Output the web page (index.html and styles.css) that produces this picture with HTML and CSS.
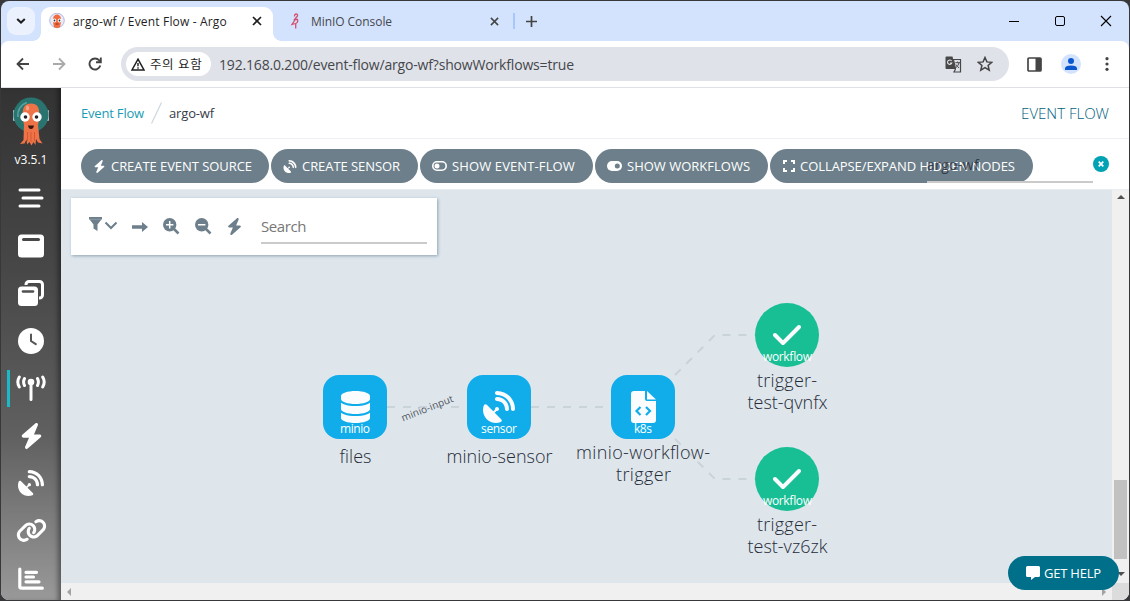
FILE: index.html
```html
<!DOCTYPE html>
<html lang="ko">
<head>
<meta charset="utf-8">
<title>argo-wf / Event Flow - Argo</title>
<link rel="stylesheet" href="styles.css">
</head>
<body>
<svg width="0" height="0" class="defs">
  <defs>
    <symbol id="bolt" viewBox="0 0 448 512"><path d="M349.4 44.6c5.9-13.7 1.5-29.7-10.6-38.5s-28.6-8-39.9 1.8l-256 224c-10 8.8-13.6 22.9-8.9 35.3S50.7 288 64 288H175.5L98.6 467.4c-5.9 13.7-1.5 29.7 10.6 38.5s28.6 8 39.9-1.8l256-224c10-8.8 13.6-22.9 8.9-35.3s-16.6-20.7-30-20.7H272.5L349.4 44.6z"/></symbol>
    <symbol id="dish" viewBox="0 0 512 512"><path d="M192 32c0-17.7 14.3-32 32-32C383.1 0 512 128.9 512 288c0 17.7-14.3 32-32 32s-32-14.3-32-32C448 164.3 347.7 64 224 64c-17.7 0-32-14.3-32-32zM60.6 220.6L164.7 324.7l28.4-28.4c-.7-2.6-1.1-5.4-1.1-8.3c0-17.7 14.3-32 32-32s32 14.3 32 32s-14.3 32-32 32c-2.9 0-5.6-.4-8.3-1.1l-28.4 28.4L291.4 451.4c14.5 14.5 11.8 38.8-7.3 46.3C260.5 506.9 234.9 512 208 512C93.1 512 0 418.9 0 304c0-26.9 5.1-52.5 14.4-76.1c7.5-19 31.8-21.8 46.3-7.3zM224 96c106 0 192 86 192 192c0 17.7-14.3 32-32 32s-32-14.3-32-32c0-70.7-57.3-128-128-128c-17.7 0-32-14.3-32-32s14.3-32 32-32z"/></symbol>
    <symbol id="check" viewBox="0 0 448 512"><path d="M438.6 105.4c12.5 12.5 12.5 32.8 0 45.3l-256 256c-12.5 12.5-32.8 12.5-45.3 0l-128-128c-12.5-12.5-12.5-32.8 0-45.3s32.8-12.5 45.3 0L160 338.7 393.4 105.4c12.5-12.5 32.8-12.5 45.3 0z"/></symbol>
    <symbol id="cross" viewBox="0 0 10 10"><path d="M1 1l8 8M9 1l-8 8" fill="none" stroke="currentColor" stroke-width="1.7"/></symbol>
  </defs>
</svg>
<div class="window">
  <header class="tabstrip">
    <div class="tab-search"><svg width="10" height="8" viewBox="0 0 10 8"><path d="M1.2 2l3.8 3.6L8.800 2" fill="none" stroke="#1f1f1f" stroke-width="2"/></svg></div>
    <div class="tab tab-active">
      <svg class="favicon" width="16" height="16" viewBox="0 0 16 16"><circle cx="8" cy="7.500" r="7.300" fill="#e9ebfb" stroke="#a6a9d6" stroke-width=".8"/><path d="M4 6C4 3 6 1.500 8 1.500S12 3 12 6l.3 2-1.300 6q-3 2-6 0L3.700 8z" fill="#ef6c3f"/><circle cx="5.300" cy="7.500" r="2" fill="#fff"/><circle cx="10.700" cy="7.500" r="2" fill="#fff"/><circle cx="5.500" cy="7.500" r=".9" fill="#333"/><circle cx="10.500" cy="7.500" r=".9" fill="#333"/><path d="M6.500 11h3" stroke="#8a2f18" stroke-width="1"/></svg>
      <span class="t tab-title title-argo">argo-wf / Event Flow - Argo</span>
      <svg class="tab-close" width="10" height="10"><use href="#cross"/></svg>
    </div>
    <div class="tab tab-idle">
      <svg class="favicon" width="16" height="16" viewBox="0 0 16 16" fill="none" stroke="#d3506f"><path d="M7.500 3.500Q7.500 1 9.200 1T10.500 3L7.500 6.500 10.500 6.500Q11.500 9.500 8.500 10.500L5 11.500 8 7M8.700 10.500V15.500" stroke-width="1.300"/></svg>
      <span class="t tab-title">MinIO Console</span>
      <svg class="tab-close" width="9" height="9"><use href="#cross"/></svg>
    </div>
    <div class="tab-sep"></div>
    <svg class="tab-new" width="11" height="11" viewBox="0 0 11 11"><path d="M5.500 0v11M0 5.500h11" stroke="#444" stroke-width="1.700"/></svg>
    <div class="win-buttons">
      <svg width="12" height="12" viewBox="0 0 12 12"><path d="M1 6.500h10" stroke="#000"/></svg>
      <svg width="12" height="12" viewBox="0 0 12 12"><rect x="1.500" y="1.500" width="9" height="9" rx="1.500" fill="none" stroke="#000"/></svg>
      <svg width="12" height="12" viewBox="0 0 12 12"><path d="M1 1l10 10M11 1L1 11" stroke="#000" stroke-width="1.100"/></svg>
    </div>
  </header>
  <div class="toolbar">
    <div class="nav">
      <svg width="14" height="14" viewBox="0 0 14 14" fill="none" stroke="#444" stroke-width="1.800"><path d="M13 7H2M7 1.500L1.500 7 7 12.500"/></svg>
      <svg width="14" height="14" viewBox="0 0 14 14" fill="none" stroke="#aaa" stroke-width="1.800"><path d="M1 7h11M7 1.500L12.500 7 7 12.500"/></svg>
      <svg width="14" height="14" viewBox="0 0 14 14" fill="none" stroke="#444" stroke-width="1.900"><path d="M12.300 8.500A5.500 5.500 0 1 1 11.300 3.500L12.500 5M12.800.5V5.300H8"/></svg>
    </div>
    <div class="omnibox">
      <div class="chip">
        <svg width="14" height="13" viewBox="0 0 14 13"><path d="M7 1.200L13 12H1z" fill="none" stroke="#1f1f1f" stroke-width="1.500"/><path d="M7 5v3.300M7 9.300v1.400" stroke="#1f1f1f" stroke-width="1.400"/></svg>
        <span class="t chip-text">주의 요함</span>
      </div>
      <span class="t url">192.168.0.200/event-flow/argo-wf?showWorkflows=true</span>
      <svg class="translate" width="17" height="17" viewBox="0 0 17 17"><path d="M1.500.5h6L10.500 13h-9a1 1 0 0 1-1-1V1.500a1 1 0 0 1 1-1z" fill="#474747"/><path d="M6.600 5A2.200 2.200 0 1 0 6.800 7H5" fill="none" stroke="#e0e2e9" stroke-width="1.100"/><path d="M8.500 3.500h7v12.500H9l1.500-3z" fill="#e0e2e9" stroke="#474747" stroke-width="1.200"/><path d="M10.300 6.700h4.700M12.700 5.500v1.200M14 7q-.8 3-3.500 5M11 8.500q1 2.200 3 3.300" fill="none" stroke="#474747"/></svg>
      <svg class="star" width="16" height="16" viewBox="0 0 16 16"><path d="M8 1.500l1.900 4.400 4.800.4-3.600 3.200 1.100 4.700L8 11.700l-4.200 2.500 1.100-4.700L1.300 6.300l4.800-.4z" fill="none" stroke="#444" stroke-width="1.500"/></svg>
    </div>
    <svg class="side-panel" width="15" height="15" viewBox="0 0 15 15"><rect x="1" y="1" width="13" height="13" rx="1" fill="none" stroke="#444" stroke-width="1.700"/><path d="M8.500 1H14v13H8.500z" fill="#444"/></svg>
    <svg class="profile" width="20" height="20" viewBox="0 0 20 20"><circle cx="10" cy="10" r="10" fill="#d3e3fd"/><circle cx="10" cy="7" r="3" fill="#0b57d0"/><path d="M4 16v-1.500Q4 11.500 10 11.500T16 14.500V16z" fill="#0b57d0"/></svg>
    <svg class="kebab" width="4" height="14" viewBox="0 0 4 14" fill="#444"><circle cx="2" cy="1.700" r="1.600"/><circle cx="2" cy="7" r="1.600"/><circle cx="2" cy="12.300" r="1.600"/></svg>
  </div>
  <div class="page">
    <nav class="sidebar">
      <svg class="logo" width="38" height="52" viewBox="0 0 38 52"><rect x="1" y="14" width="3" height="11" rx="1" fill="#a9bfcf"/><rect x="34" y="14" width="3" height="11" rx="1" fill="#a9bfcf"/><circle cx="19" cy="19" r="17.500" fill="#2a7470"/><path d="M6 21A13 13 0 0 1 15 6.500" fill="none" stroke="#57a3a0" stroke-width="1.500"/><path d="M11 20C10 11 13 7.500 19 7.500S28 11 27 20q0 6-1 9l1.500 14 3 4.500-4.500-1-2-3.500-.5 6-2-3-2 3.500-2-3.500-2.500 2.500-.5-5-2 4-4.500.5 3.500-4L12 29Q11 25 11 20z" fill="#ee7448"/><path d="M15.500 36v9M19 36v10M22.500 36v9" stroke="#d65632"/><ellipse cx="15.500" cy="12" rx="1.700" ry="2.500" fill="#f8a184"/><circle cx="13" cy="21" r="4.700" fill="#fff"/><circle cx="25" cy="21" r="4.700" fill="#fff"/><circle cx="13.500" cy="21" r="1.800" fill="#222"/><circle cx="24.500" cy="21" r="1.800" fill="#222"/><path d="M16 29.500h6q-.6 3.500-3 3.500t-3-3.500z" fill="#3b1712"/></svg>
      <span class="t version">v3.5.1</span>
      <a class="item"><svg width="26" height="20" viewBox="0 0 26 20" stroke="#fff" stroke-width="3" stroke-linecap="round"><path d="M2 2h19M5 10h19M2 18h19"/></svg></a>
      <a class="item"><svg width="26" height="24" viewBox="0 0 26 24"><rect y=".5" width="26" height="23" rx="3.500" fill="#fff"/><path d="M5.500 5.500h15" stroke="#484848" stroke-width="3" stroke-linecap="round"/></svg></a>
      <a class="item"><svg width="26" height="26" viewBox="0 0 26 26"><path d="M8 5V4.500a3 3 0 0 1 3-3h10.500a3 3 0 0 1 3 3V15a3 3 0 0 1-3 3H21" fill="none" stroke="#fff" stroke-width="3"/><rect y="6.500" width="20" height="19.500" rx="3.500" fill="#fff"/><path d="M5 11.500h10" stroke="#505050" stroke-width="2.600" stroke-linecap="round"/></svg></a>
      <a class="item"><svg width="26" height="26" viewBox="0 0 26 26"><circle cx="13" cy="13" r="13" fill="#fff"/><path d="M13 6.500V13l4.800 3.200" fill="none" stroke="#555" stroke-width="2" stroke-linecap="round"/></svg></a>
      <a class="item item-active"><svg width="30" height="26" viewBox="0 0 30 26" fill="none" stroke="#fff" stroke-width="3" stroke-linecap="round"><circle cx="15" cy="7" r="3.300" fill="#fff" stroke="none"/><path d="M15 7v17.500M8.500 3.500q-1.800 3.500 0 7M21.500 3.500q1.800 3.500 0 7M3.300 2q-3 5 0 10M26.700 2q3 5 0 10"/></svg></a>
      <a class="item"><svg width="23" height="26"><use href="#bolt"/></svg></a>
      <a class="item"><svg width="26" height="26"><use href="#dish"/></svg></a>
      <a class="item"><svg width="31" height="25" viewBox="0 0 640 512"><path d="M579.8 267.7c56.5-56.5 56.5-148 0-204.5c-50-50-128.8-56.5-186.3-15.4l-1.6 1.1c-14.4 10.3-17.7 30.3-7.4 44.600s30.3 17.7 44.600 7.400l1.600-1.100c32.100-22.900 76-19.300 103.800 8.600c31.500 31.500 31.500 82.500 0 114L422.300 334.800c-31.500 31.500-82.500 31.500-114 0c-27.900-27.900-31.500-71.800-8.600-103.800l1.100-1.600c10.300-14.400 6.900-34.400-7.400-44.600s-34.400-6.900-44.600 7.400l-1.100 1.600C206.500 251.200 213 330 263 380c56.500 56.500 148 56.500 204.500 0L579.800 267.700zM60.200 244.300c-56.500 56.500-56.500 148 0 204.500c50 50 128.800 56.500 186.300 15.400l1.600-1.100c14.400-10.300 17.700-30.300 7.400-44.600s-30.300-17.700-44.600-7.400l-1.600 1.100c-32.100 22.900-76 19.300-103.800-8.600C74 372 74 321 105.500 289.500L217.700 177.200c31.500-31.500 82.500-31.500 114 0c27.900 27.900 31.500 71.800 8.600 103.900l-1.100 1.600c-10.300 14.400-6.900 34.400 7.400 44.600s34.400 6.900 44.600-7.400l1.100-1.600C433.500 260.800 427 182 377 132c-56.500-56.500-148-56.500-204.500 0L60.200 244.300z"/></svg></a>
      <a class="item"><svg width="26" height="23" viewBox="0 0 26 23" fill="none" stroke="#fff" stroke-width="3.200" stroke-linecap="round" stroke-linejoin="round"><path d="M1.800 2v17.500q0 1.700 1.700 1.700H24.300M8 5.300h10.500M8 10h7.500M8 14.800h13" /></svg></a>
    </nav>
    <main class="main">
      <div class="crumbs">
        <a class="t crumb-link">Event Flow</a>
        <svg width="11" height="22" viewBox="0 0 11 22"><path d="M10.500.5L.5 21.500" stroke="#ccd6dd" stroke-width="1.200"/></svg>
        <span class="t crumb">argo-wf</span>
        <span class="t heading">EVENT FLOW</span>
      </div>
      <div class="actions">
        <button class="pill p1"><svg width="13" height="13"><use href="#bolt"/></svg><span class="t">CREATE EVENT SOURCE</span></button>
        <button class="pill p2"><svg width="14" height="13"><use href="#dish"/></svg><span class="t">CREATE SENSOR</span></button>
        <button class="pill p3"><svg width="15" height="10" viewBox="0 0 15 10"><rect x=".8" y=".8" width="13.400" height="8.400" rx="4.200" fill="none" stroke="#fff" stroke-width="1.600"/><circle cx="5" cy="5" r="2.500"/></svg><span class="t">SHOW EVENT-FLOW</span></button>
        <button class="pill p4"><svg width="15" height="10" viewBox="0 0 15 10"><rect width="15" height="10" rx="5"/><circle cx="10.300" cy="5" r="2.500" fill="#6d7f8b"/></svg><span class="t">SHOW WORKFLOWS</span></button>
        <button class="pill p5"><svg width="12" height="12" viewBox="0 0 12 12"><path d="M4 1H1v3M8 1h3v3M4 11H1V8M8 11h3V8" fill="none" stroke="#fff" stroke-width="2"/></svg><span class="t">COLLAPSE/EXPAND HIDDEN NODES</span></button>
        <div class="ns-field"><span class="t">argo-wf</span></div>
        <div class="ns-clear"><svg width="6" height="6" viewBox="0 0 6 6"><path d="M.7.7l4.600 4.600M5.300.7L.7 5.300" stroke="#fff" stroke-width="1.700"/></svg></div>
      </div>
      <div class="canvas-wrap">
        <div class="canvas">
          <div class="panel">
            <svg class="filter" width="28" height="15" viewBox="0 0 28 15"><path d="M0 0h13v1.800L8.500 7.500V14L4.500 11.500v-4L0 1.800z"/><path d="M0 2.300h13" stroke="#9aa8b1" stroke-width=".7"/><path d="M16.500 5.500L22 11l5.500-5.500" fill="none" stroke="#6d7f8b" stroke-width="2"/></svg>
            <svg width="16" height="10" viewBox="0 0 16 10"><path d="M0 3.300h10V0l6 5-6 5V6.700H0z"/></svg>
            <svg width="17" height="17" viewBox="0 0 17 17"><circle cx="6.700" cy="6.700" r="6.700"/><path d="M11 11l4.500 4.500" stroke="#6d7f8b" stroke-width="2.500"/><path d="M3 6.700h7.400M6.700 3v7.400" stroke="#fff" stroke-width="1.500"/></svg>
            <svg width="17" height="17" viewBox="0 0 17 17"><circle cx="6.700" cy="6.700" r="6.700"/><path d="M11 11l4.500 4.500" stroke="#6d7f8b" stroke-width="2.500"/><path d="M3 6.700h7.400" stroke="#fff" stroke-width="1.500"/></svg>
            <svg width="15" height="17"><use href="#bolt"/></svg>
            <div class="search"><span class="t">Search</span></div>
          </div>
          <svg class="graph" width="1051" height="393" viewBox="61 190 1051 393">
            <g fill="none" stroke="#c9d3da" stroke-width="2" stroke-dasharray="8 8">
              <path d="M387 407H467"/><path d="M531 407H611"/>
              <path d="M675 375L715 335H755"/><path d="M675 439L715 479H755"/>
            </g>
            <g fill="#10adea">
              <rect x="323" y="375" width="64" height="64" rx="16"/>
              <rect x="467" y="375" width="64" height="64" rx="16"/>
              <rect x="611" y="375" width="64" height="64" rx="16"/>
            </g>
            <g fill="#18be94"><circle cx="787" cy="335" r="32"/><circle cx="787" cy="479" r="32"/></g>
            <g fill="#fafcfe">
              <svg x="341" y="391" width="29" height="32" preserveAspectRatio="none" viewBox="0 0 448 512"><path d="M448 80v48c0 44.200-100.300 80-224 80S0 172.200 0 128V80C0 35.800 100.300 0 224 0S448 35.800 448 80zM393.200 214.700c20.800-7.400 39.900-16.900 54.800-28.600V288c0 44.200-100.300 80-224 80S0 332.200 0 288V186.100c14.900 11.800 34 21.200 54.800 28.600C99.700 230.700 159.500 240 224 240s124.300-9.300 169.200-25.300zM0 346.100c14.900 11.800 34 21.200 54.800 28.600C99.700 390.700 159.500 400 224 400s124.300-9.300 169.200-25.300c20.800-7.400 39.900-16.900 54.800-28.600V432c0 44.200-100.300 80-224 80S0 476.200 0 432V346.100z"/></svg>
              <use href="#dish" x="483" y="391" width="32" height="32"/>
              <path d="M634 391h11v8q0 2 2 2h9v19q0 3-3 3h-19q-3 0-3-3v-26q0-3 3-3zM647 391l9 8.500h-9z"/>
              <path d="M640.500 407l-4 4 4 4M646 407l4 4-4 4" fill="none" stroke="#10adea" stroke-width="2.200"/>
              <use href="#check" x="773" y="319" width="28" height="32"/>
              <use href="#check" x="773" y="463" width="28" height="32"/>
            </g>
            <g class="kind">
              <text x="340" y="433" textLength="30">minio</text>
              <text x="481" y="433" textLength="36">sensor</text>
              <text x="634" y="433" textLength="18">k8s</text>
              <text x="763" y="361" textLength="49">workflow</text>
              <text x="763" y="505" textLength="49">workflow</text>
            </g>
            <g class="name">
              <text x="339.500" y="463" textLength="32">files</text>
              <text x="446.500" y="463" textLength="106">minio-sensor</text>
              <text x="576" y="459" textLength="134">minio-workflow-</text>
              <text x="616" y="481" textLength="55">trigger</text>
              <text x="757" y="387" textLength="60">trigger-</text>
              <text x="747.500" y="409" textLength="80">test-qvnfx</text>
              <text x="757" y="531" textLength="60">trigger-</text>
              <text x="747.500" y="553" textLength="80">test-vz6zk</text>
            </g>
            <text class="edge" x="403" y="421.500" textLength="55" transform="rotate(-21.500 403 421.500)">minio-input</text>
          </svg>
        </div>
        <div class="vbar"><i class="up"></i><div class="thumb"></div><i class="down"></i></div>
        <div class="hbar"><i class="left"></i><i class="right"></i></div>
        <div class="corner"></div>
      </div>
    </main>
    <div class="help"><svg width="14" height="14" viewBox="0 0 14 14"><path d="M1.500 0h11Q14 0 14 1.500v8Q14 11 12.500 11H9l-4 3v-3H1.500Q0 11 0 9.500v-8Q0 0 1.500 0z"/></svg><span class="t">GET HELP</span></div>
  </div>
</div>
</body>
</html>
```

FILE: styles.css
```css
* { box-sizing: border-box; }
body { margin: 0; width: 1130px; height: 601px; overflow: hidden; background: #38383b; font-family: "Open Sans", "Noto Sans CJK KR", sans-serif; font-size: 13px; }
.defs { position: absolute; }
svg { display: block; flex: none; }
.t { white-space: nowrap; flex: none; }
.window { margin: 1px; width: 1128px; height: 599px; border-radius: 8px; overflow: hidden; background: #d3e3fd; display: flex; flex-direction: column; }

.tabstrip { height: 40px; flex: none; display: flex; align-items: center; padding-left: 6px; }
.tab-search { width: 28px; height: 28px; border-radius: 9px; background: #ebf2fe; display: flex; align-items: center; justify-content: center; }
.tab { display: flex; align-items: center; }
.tab-title { font-size: 12px; color: #1f1f1f; margin-left: 8px; padding-top: 1px; }
.title-argo { letter-spacing: .17px; }
.tab-active { align-self: flex-end; width: 232px; height: 34px; margin-left: 6px; padding: 0 11px 6px 8px; background: #fff; border-radius: 9px 9px 0 0; color: #1f1f1f; position: relative; }
.tab-active::before, .tab-active::after { content: ""; position: absolute; bottom: 0; width: 8px; height: 8px; }
.tab-active::before { left: -8px; background: radial-gradient(circle at 0 0, transparent 7.5px, #fff 8px); }
.tab-active::after { right: -8px; background: radial-gradient(circle at 100% 0, transparent 7.5px, #fff 8px); }
.tab-close { margin-left: auto; }
.tab-idle { width: 226px; padding-left: 14px; color: #444; }
.tab-idle .tab-title { color: #45484c; letter-spacing: -.06px; }
.tab-sep { width: 2px; height: 16px; margin-left: 14px; background: #a8c7fa; }
.tab-new { margin-left: 11px; }
.win-buttons { margin-left: auto; display: flex; gap: 34px; padding-right: 17px; }

.toolbar { height: 47px; flex: none; background: #fff; border-radius: 8px 8px 0 0; border-bottom: 1px solid #dfe1e4; display: flex; align-items: center; padding-left: 15px; }
.nav { display: flex; gap: 22px; width: 105px; }
.omnibox { width: 888px; height: 34px; border-radius: 17px; background: #e0e2e9; display: flex; align-items: center; padding-left: 5px; }
.chip { width: 85px; height: 24px; border-radius: 12px; background: #fff; display: flex; align-items: center; padding-left: 5px; gap: 5px; }
.chip-text { font-size: 12.5px; letter-spacing: .6px; color: #1f1f1f; padding-bottom: 2px; }
.url { margin-left: 8px; font-size: 14px; letter-spacing: -.17px; color: #45474b; }
.translate { margin-left: auto; }
.star { margin: 0 16px 0 15px; }
.side-panel { margin-left: 18px; }
.profile { margin-left: 19px; }
.kebab { margin-left: 24px; }

.page { flex: 1; display: flex; min-height: 0; position: relative; }
.sidebar { width: 60px; background: linear-gradient(#333 0, #474747 35%, #606060 68%, #999 100%); box-shadow: inset -5px 0 5px -2px rgba(0,0,0,.4); display: flex; flex-direction: column; align-items: center; padding-top: 8px; fill: #fff; }
.version { color: #fff; font-size: 12px; line-height: 16px; margin-top: 4px; height: 22.5px; flex: none; }
.item { width: 60px; height: 47.500px; flex: none; display: flex; align-items: center; justify-content: center; position: relative; }
.item-active::before { content: ""; position: absolute; left: 6px; top: 5px; width: 3px; height: 37px; background: #18b9c9; }
.main { width: 1068px; display: flex; flex-direction: column; background: #fff; }
.crumbs { height: 51px; border-bottom: 1px solid #edf1f5; display: flex; align-items: center; padding: 0 20px; }
.crumb-link { color: #1a9cb3; margin-right: 7px; letter-spacing: -.19px; }
.crumb { color: #363c4a; margin-left: 7px; letter-spacing: -.15px; }
.heading { margin-left: auto; color: #006280; font-size: 15px; font-weight: 300; }
.actions { height: 51px; border-bottom: 1px solid #e8edf2; display: flex; align-items: center; gap: 2px; padding: 4px 0 0 20px; position: relative; }
.pill { height: 34px; border: 0; border-radius: 17px; background: #6d7f8b; color: #fff; fill: #fff; font: 13px "Open Sans", sans-serif; letter-spacing: -.06px; padding: 0 0 0 12px; display: flex; align-items: center; gap: 5px; }
.p1 { width: 188px; }
.p2 { width: 147px; }
.p3 { width: 173px; letter-spacing: .12px; }
.p4 { width: 173px; letter-spacing: 0; }
.p5 { width: 263px; padding-left: 13px; }
.ns-field { position: absolute; left: 866px; top: 16px; width: 166px; height: 28px; border-bottom: 2px solid #cacaca; color: rgba(40,45,58,.85); font-size: 14px; letter-spacing: .34px; line-height: 19px; }
.ns-clear { position: absolute; left: 1032px; top: 17px; width: 16px; height: 16px; border-radius: 50%; background: #00a2b3; display: flex; align-items: center; justify-content: center; }

.canvas-wrap { display: grid; grid-template: 393px 17px / 1051px 17px; }
.canvas { background: #dee6ec; position: relative; overflow: hidden; }
.panel { position: absolute; left: 10px; top: 8px; width: 366px; height: 57px; background: #fff; box-shadow: 1px 1px 3px #8fa4b1; display: flex; align-items: center; padding-left: 18px; fill: #6d7f8b; }
.panel svg { margin-right: 15px; }
.panel .filter { margin-bottom: 4px; }
.search { width: 166px; height: 36px; margin: 0 0 2px 4px; border-bottom: 2px solid #cacaca; color: #777; font-size: 15px; letter-spacing: -.42px; line-height: 36px; }
.kind { font-size: 12px; fill: #fff; }
.name { font-size: 18px; fill: #252b38; font-weight: 300; }
.edge { font-size: 10px; fill: #50575f; }
.vbar { background: #f0f0f0; display: flex; flex-direction: column; align-items: center; padding: 5px 0 7px; }
.hbar { background: #f0f0f0; display: flex; align-items: center; justify-content: space-between; padding: 0 6px; }
.corner { background: #dcdcdc; }
.thumb { width: 13px; height: 79px; margin-top: 281px; background: #c1c1c1; }
i { display: block; width: 0; height: 0; border: 4px solid transparent; }
.up { border-top: 0; border-bottom-color: #505050; }
.down { border-bottom: 0; border-top-color: #505050; margin-top: auto; }
.left { border-left: 0; border-right-color: #a3a3a3; }
.right { border-right: 0; border-left-color: #a3a3a3; }
.help { position: absolute; left: 1007px; top: 468px; width: 111px; height: 34px; border-radius: 17px; background: #006f8a; color: #fff; fill: #fff; display: flex; align-items: center; gap: 4px; padding-left: 18px; font-size: 13px; letter-spacing: -.21px; }
```
